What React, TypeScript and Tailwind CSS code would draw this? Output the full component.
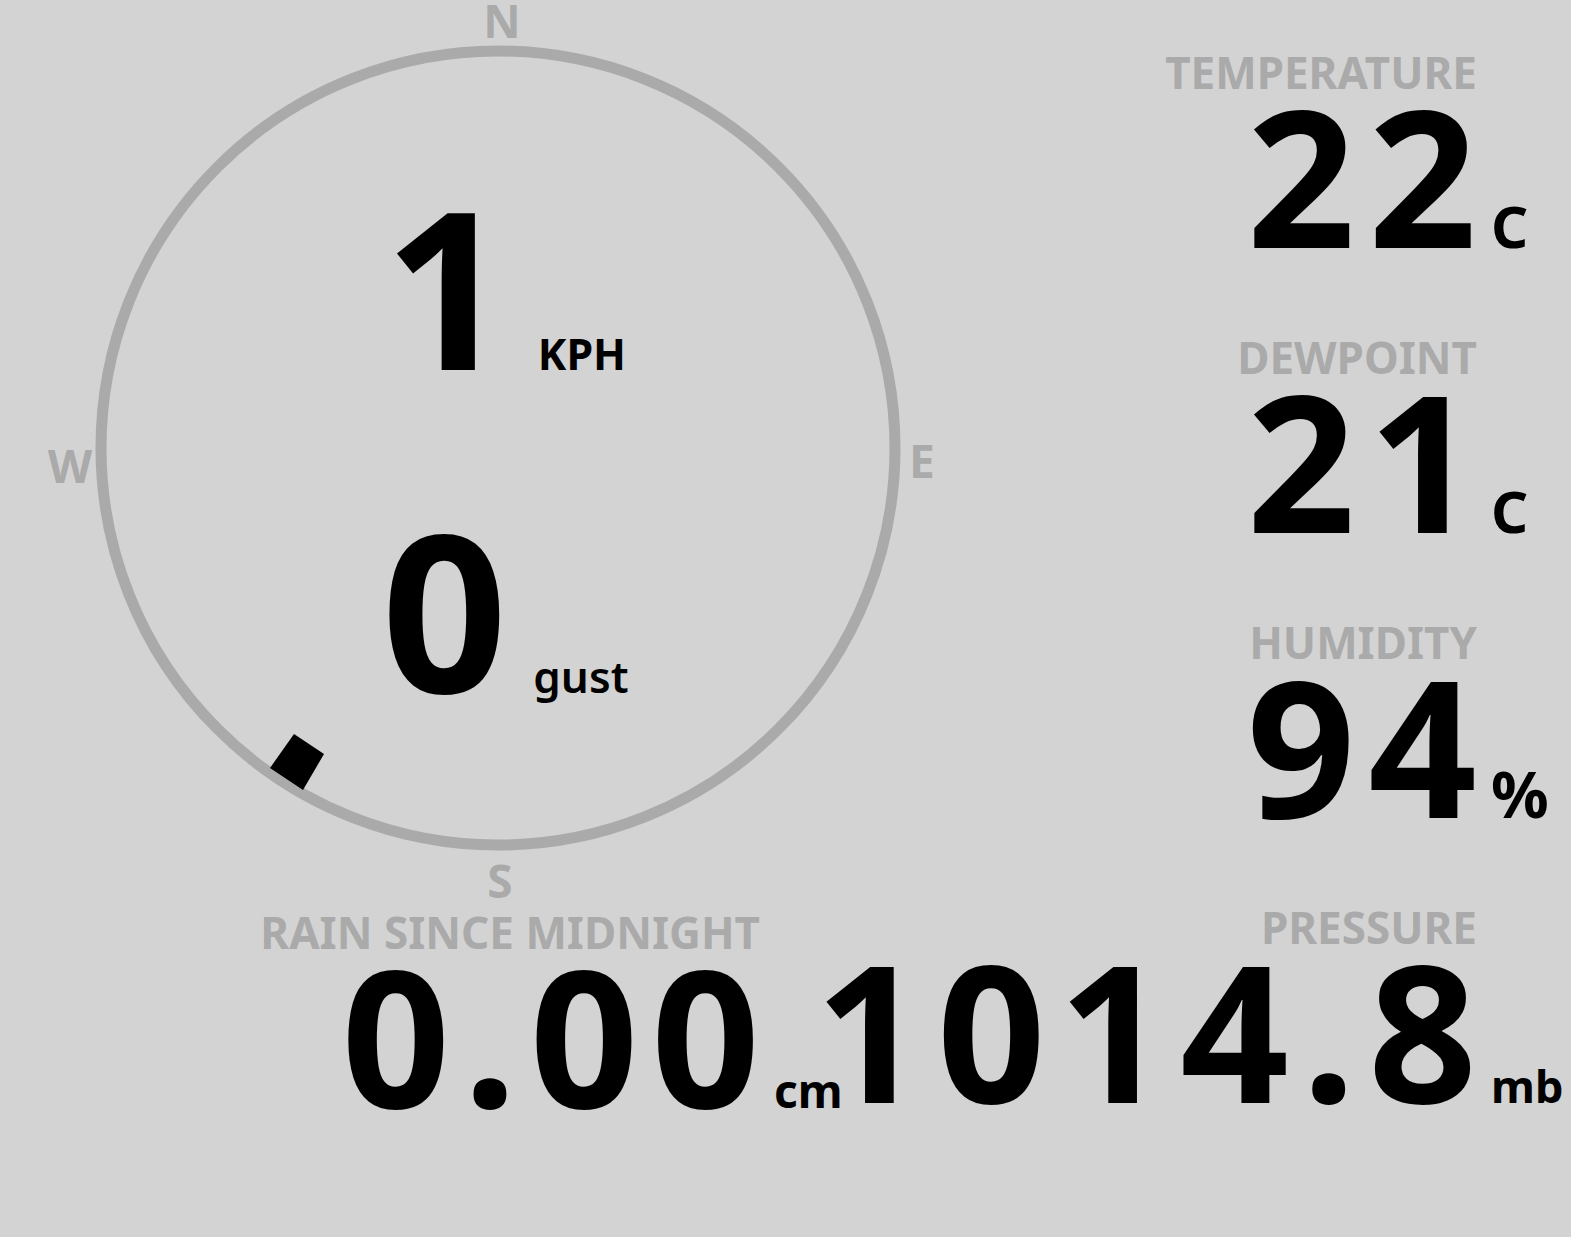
import type { ReactNode } from "react";

type StatProps = {
  label: string;
  value: string;
  unit: string;
  unitClass?: string;
  cols: string;
};

function Stat({ label, value, unit, unitClass = "text-[58px]", cols }: StatProps) {
  return (
    <div className={`grid ${cols} items-baseline`}>
      <div className="justify-self-end text-[44px] leading-none text-[#aaaaaa]">{label}</div>
      <div />
      <div className="-mr-[13px] justify-self-end text-[190px] leading-[161px] tracking-[13px] text-black">
        {value}
      </div>
      <div className={`whitespace-nowrap pl-[14px] leading-none text-black ${unitClass}`}>{unit}</div>
    </div>
  );
}

function Point({ children, className }: { children: ReactNode; className: string }) {
  return (
    <span className={`absolute -translate-x-1/2 text-[46px] leading-[40px] text-[#aaaaaa] ${className}`}>
      {children}
    </span>
  );
}

function Compass() {
  return (
    <div className="relative h-[910px] w-[1000px] shrink-0">
      <svg className="absolute inset-0" width="1000" height="910" viewBox="0 0 1000 910">
        <circle cx="498" cy="448" r="397" fill="none" stroke="#aaaaaa" strokeWidth="11" />
        <polygon points="294,734 324,754 303,790 270,768" fill="#000" />
      </svg>
      <Point className="left-[502px] top-0">N</Point>
      <Point className="left-[500px] top-[860px]">S</Point>
      <Point className="left-[70px] top-[445px]">W</Point>
      <Point className="left-[922px] top-[440px]">E</Point>
      <div className="relative flex flex-col items-center gap-[103px] pt-[175px] pl-[10px]">
        <div className="flex items-baseline gap-[28px]">
          <span className="text-[220px] leading-none">1</span>
          <span className="text-[43px] leading-none">KPH</span>
        </div>
        <div className="flex items-baseline gap-[20px]">
          <span className="text-[220px] leading-none tracking-[6px]">0</span>
          <span className="text-[44px] font-semibold leading-none">gust</span>
        </div>
      </div>
    </div>
  );
}

export default function App() {
  return (
    <div className="min-h-screen w-full overflow-hidden bg-[#d3d3d3] font-['Noto_Sans',sans-serif] font-bold text-black">
      <div className="flex">
        <Compass />
        <div className="flex flex-1 flex-col items-end gap-[80px] pt-[50px]">
          <Stat label="TEMPERATURE" value="22" unit="C" cols="grid-cols-[auto_94px]" />
          <Stat label="DEWPOINT" value="21" unit="C" cols="grid-cols-[auto_94px]" />
          <Stat label="HUMIDITY" value="94" unit="%" unitClass="text-[64px]" cols="grid-cols-[auto_94px]" />
        </div>
      </div>
      <div className="flex">
        <Stat
          label="RAIN SINCE MIDNIGHT"
          value="0.00"
          unit="cm"
          unitClass="text-[46px]"
          cols="grid-cols-[760px_0px]"
        />
        <div className="ml-auto -mt-[5px] shrink-0">
          <Stat label="PRESSURE" value="1014.8" unit="mb" unitClass="text-[45px]" cols="grid-cols-[auto_94px]" />
        </div>
      </div>
    </div>
  );
}
